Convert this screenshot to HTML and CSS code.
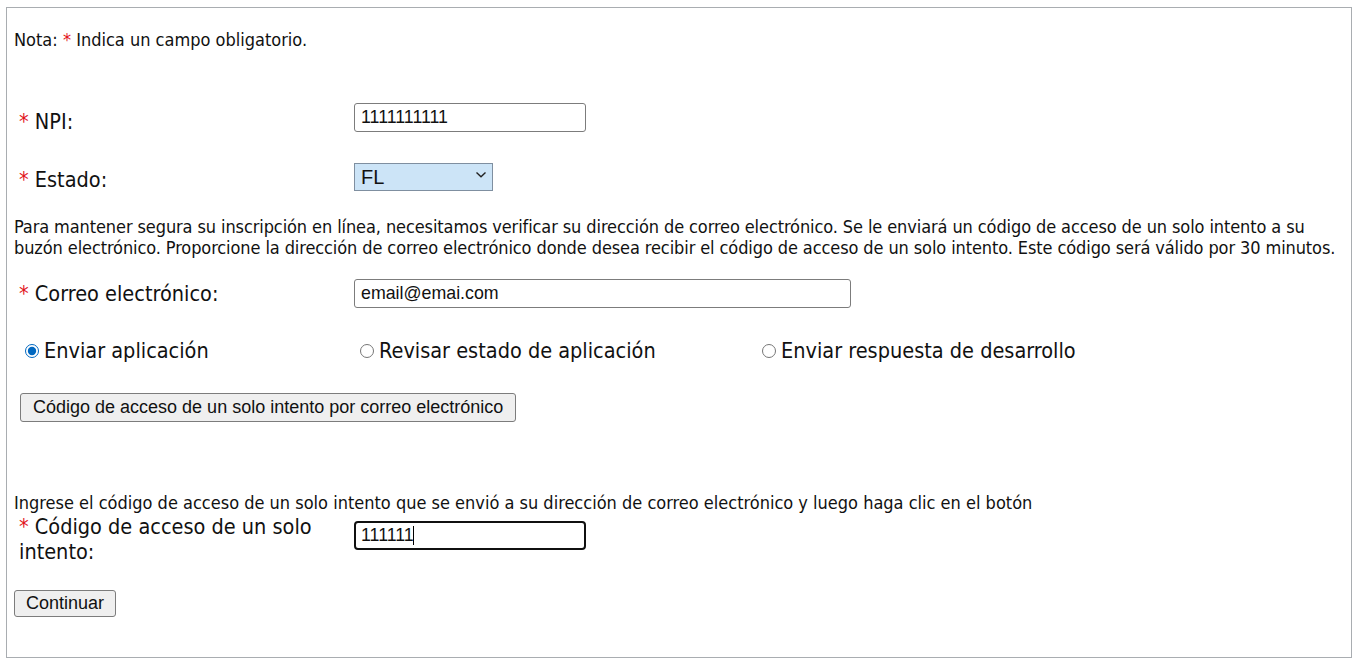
FILE: index.html
```html
<!DOCTYPE html>
<html lang="es">
<head>
<meta charset="utf-8">
<title>Verificación de correo electrónico</title>
<link rel="stylesheet" href="styles.css">
</head>
<body>
<form class="box">
  <p class="note">Nota: <span class="req">*</span> Indica un campo obligatorio.</p>

  <div class="row row-npi">
    <label class="lbl" for="npi"><span class="req">*</span> NPI:</label>
    <input class="txt txt-short" id="npi" type="text" value="1111111111">
  </div>

  <div class="row row-state">
    <label class="lbl" for="estado"><span class="req">*</span> Estado:</label>
    <span class="sel-wrap">
      <select class="sel" id="estado"><option>FL</option></select>
      <svg class="chev" width="12" height="8" viewBox="0 0 12 8"><path d="M1.5 1.5 L6 5.8 L10.5 1.5" fill="none" stroke="#222" stroke-width="1.4"/></svg>
    </span>
  </div>

  <p class="para para-info">Para mantener segura su inscripción en línea, necesitamos verificar su dirección de correo electrónico. Se le enviará un código de acceso de un solo intento a su buzón electrónico. Proporcione la dirección de correo electrónico donde desea recibir el código de acceso de un solo intento. Este código será válido por 30 minutos.</p>

  <div class="row row-mail">
    <label class="lbl" for="mail"><span class="req">*</span> Correo electrónico:</label>
    <input class="txt txt-long" id="mail" type="text" value="email@emai.com">
  </div>

  <div class="radios">
    <label class="radio"><input type="radio" name="acc" checked> Enviar aplicación</label>
    <label class="radio"><input type="radio" name="acc"> Revisar estado de aplicación</label>
    <label class="radio"><input type="radio" name="acc"> Enviar respuesta de desarrollo</label>
  </div>

  <div class="send-row">
    <button type="button" class="btn">Código de acceso de un solo intento por correo electrónico</button>
  </div>

  <p class="para para-enter">Ingrese el código de acceso de un solo intento que se envió a su dirección de correo electrónico y luego haga clic en el botón</p>

  <div class="row row-code">
    <label class="lbl lbl-wrap" for="code"><span class="req">*</span> Código de acceso de un solo intento:</label>
    <span class="focus-wrap">
      <input class="txt txt-short txt-focus" id="code" type="text" value="111111">
      <span class="caret"></span>
    </span>
  </div>

  <div class="continue-row">
    <button type="button" class="btn btn-continue">Continuar</button>
  </div>
</form>
</body>
</html>
```

FILE: styles.css
```css
html, body {
  margin: 0;
  padding: 0;
  background: #ffffff;
}

body {
  padding: 7px 8px 6px 6px;
  font-family: "DejaVu Sans Condensed", "DejaVu Sans", sans-serif;
  color: #111;
}

.box {
  box-sizing: border-box;
  height: 651px;
  border: 1px solid #a9adb1;
  padding: 22px 7px 0 7px;
  display: flex;
  flex-direction: column;
  align-items: flex-start;
}

.note,
.para {
  margin: 0;
  font-size: 18px;
  line-height: 20px;
}

.req {
  color: #e2131b;
}

.row {
  display: flex;
  align-items: center;
}

.lbl {
  width: 335px;
  padding-left: 5px;
  font-size: 21.5px;
  line-height: 23px;
}

.row-npi {
  margin-top: 52px;
}

.row-npi .lbl {
  padding-top: 8px;
}

.row-state {
  margin-top: 30px;
}

.row-state .lbl {
  padding-top: 5px;
}

.para-info {
  margin-top: 25px;
  line-height: 21px;
  width: 1340px;
  letter-spacing: -0.1px;
}

.row-mail {
  margin-top: 21px;
}

.txt {
  box-sizing: border-box;
  height: 29px;
  margin: 0;
  padding: 1px 6px;
  border: 1px solid #7c7c7c;
  border-radius: 3px;
  font-family: "Liberation Sans", Arial, sans-serif;
  font-size: 17.8px;
  color: #111;
  background: #fff;
}

.txt-short {
  width: 232px;
}

.txt-long {
  width: 497px;
}

.sel-wrap {
  position: relative;
  display: inline-block;
}

.sel {
  appearance: none;
  -webkit-appearance: none;
  box-sizing: border-box;
  width: 139px;
  height: 28px;
  margin: 0;
  padding: 0 6px;
  border: 1px solid #7f8fa0;
  border-radius: 0;
  background: #cce4f7;
  font-family: "Liberation Sans", Arial, sans-serif;
  font-size: 20px;
  color: #111;
}

.chev {
  position: absolute;
  right: 6px;
  top: 8px;
  pointer-events: none;
}

.radios {
  margin-top: 31px;
  display: grid;
  grid-template-columns: 335px 402px auto;
  padding-left: 11px;
  font-size: 21.5px;
  line-height: 24px;
}

.radio {
  display: flex;
  align-items: center;
}

.radio input {
  width: 14px;
  height: 14px;
  margin: 0 5px 0 0;
  accent-color: #0067c0;
}

.send-row {
  margin-top: 30px;
  padding-left: 6px;
}

.btn {
  box-sizing: border-box;
  height: 29px;
  margin: 0;
  padding: 0 12px;
  border: 1px solid #7c7c7c;
  border-radius: 3px;
  background: #efefef;
  font-family: "Liberation Sans", Arial, sans-serif;
  font-size: 18px;
  color: #111;
}

.para-enter {
  margin-top: 71px;
}

.row-code {
  margin-top: 1px;
  align-items: flex-start;
}

.lbl-wrap {
  width: 320px;
  margin-right: 15px;
  line-height: 25px;
}

.focus-wrap {
  position: relative;
  display: inline-block;
  margin-top: 7px;
}

.txt-focus {
  border: 2px solid #101010;
  border-radius: 4px;
  padding-left: 5px;
  outline: none;
  caret-color: transparent;
}

.caret {
  position: absolute;
  left: 59px;
  top: 5px;
  width: 1px;
  height: 19px;
  background: #000;
}

.continue-row {
  margin-top: 26px;
}

.btn-continue {
  height: 27px;
  padding: 0 11px;
}
```
